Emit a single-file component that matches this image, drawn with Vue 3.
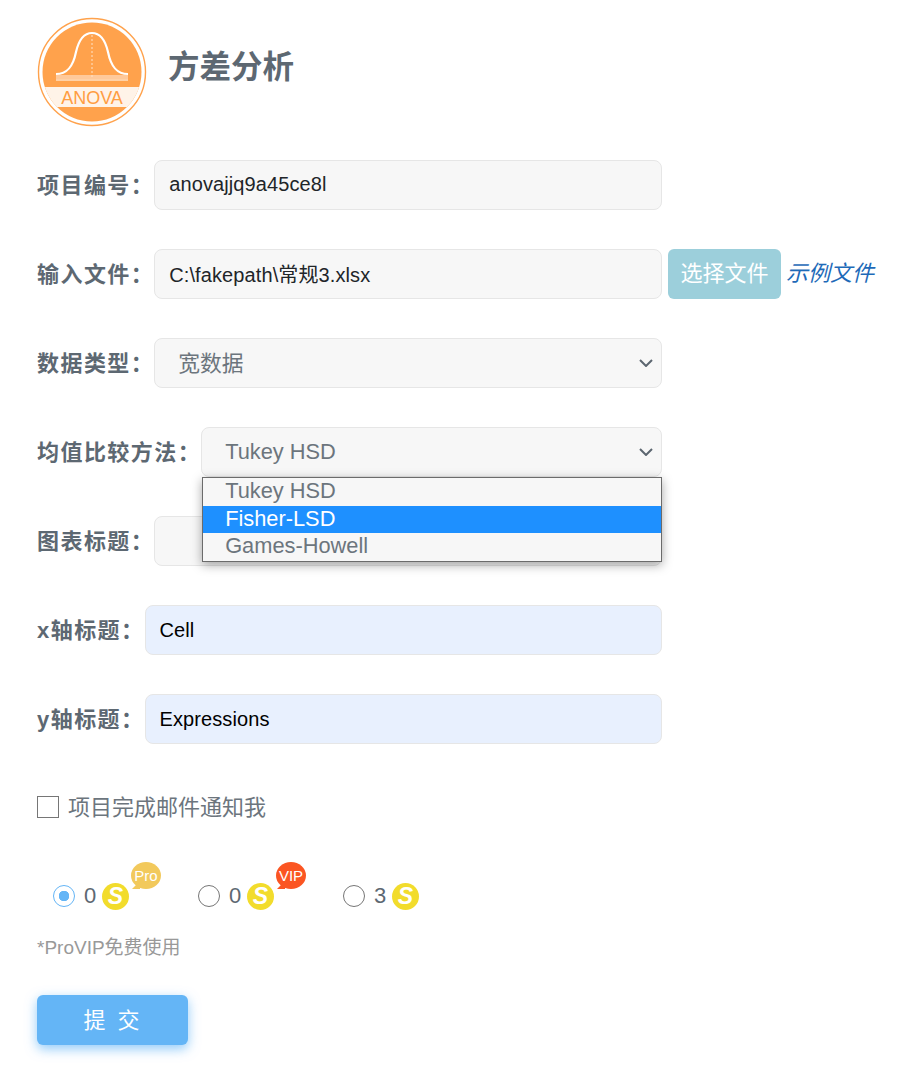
<script setup>
import { ref } from 'vue';

const projectId = ref('anovajjq9a45ce8l');
const filePath = ref('C:\\fakepath\\常规3.xlsx');
const dataType = ref('宽数据');
const chartTitle = ref('');
const xTitle = ref('Cell');
const yTitle = ref('Expressions');
const notify = ref(false);
const plan = ref('pro');

const methods = ['Tukey HSD', 'Fisher-LSD', 'Games-Howell'];
const method = ref('Tukey HSD');
const hovered = ref('Fisher-LSD');

const plans = [
	{ id: 'pro', price: 0, badge: 'Pro', color: '#f2c95c' },
	{ id: 'vip', price: 0, badge: 'VIP', color: '#fb5522' },
	{ id: 'normal', price: 3 },
];
</script>

<template>
	<main class="page">
		<header class="head">
			<svg class="logo" viewBox="0 0 110 110" width="110" height="110">
				<defs>
					<clipPath id="disc"><circle cx="55" cy="55" r="49.5" /></clipPath>
				</defs>
				<circle cx="55" cy="55" r="53.5" fill="#fff" stroke="#ffa24c" stroke-width="1.4" />
				<circle cx="55" cy="55" r="49.5" fill="#ffa24c" />
				<rect x="0" y="70" width="110" height="20" fill="#fff3e8" clip-path="url(#disc)" />
				<path d="M19 58 H91 V62 H19 Z" fill="#ffc99a" />
				<path d="M19 57 C30 57 36 50 39 35 C42 22 47 16 55 16 C63 16 68 22 71 35 C74 50 80 57 91 57" fill="none" stroke="#fff" stroke-width="2.2" />
				<path d="M19 63 H91" stroke="#fff" stroke-width="1.2" />
				<path d="M55 18 V62" stroke="#ffe3c8" stroke-width="1" stroke-dasharray="2 2" />
				<text x="55" y="87" text-anchor="middle" class="logo-text">ANOVA</text>
			</svg>
			<h1>方差分析</h1>
		</header>

		<form class="form" @submit.prevent>
			<div class="row">
				<div class="field">
					<label>项目编号：</label>
					<input class="box plain" v-model="projectId" />
				</div>
			</div>

			<div class="row">
				<div class="field">
					<label>输入文件：</label>
					<input class="box plain" v-model="filePath" readonly />
				</div>
				<button type="button" class="pick">选择文件</button>
				<a class="sample" href="#">示例文件</a>
			</div>

			<div class="row">
				<div class="field">
					<label>数据类型：</label>
					<div class="select box cjk">
						<span>{{ dataType }}</span>
						<svg class="chev" viewBox="0 0 14 8" width="14" height="8"><path d="M1 1 L7 7 L13 1" fill="none" stroke="#5c6670" stroke-width="2" /></svg>
					</div>
				</div>
			</div>

			<div class="row">
				<div class="field">
					<label>均值比较方法：</label>
					<div class="select box">
						<span>{{ method }}</span>
						<svg class="chev" viewBox="0 0 14 8" width="14" height="8"><path d="M1 1 L7 7 L13 1" fill="none" stroke="#5c6670" stroke-width="2" /></svg>
						<ul class="menu">
							<li
								v-for="m in methods"
								:key="m"
								:class="{ on: m === hovered }"
								@mouseenter="hovered = m"
								@click="method = m"
							>{{ m }}</li>
						</ul>
					</div>
				</div>
			</div>

			<div class="row">
				<div class="field">
					<label>图表标题：</label>
					<input class="box plain" v-model="chartTitle" />
				</div>
			</div>

			<div class="row">
				<div class="field">
					<label>x轴标题：</label>
					<input class="box filled" v-model="xTitle" />
				</div>
			</div>

			<div class="row">
				<div class="field">
					<label>y轴标题：</label>
					<input class="box filled" v-model="yTitle" />
				</div>
			</div>

			<label class="check">
				<input type="checkbox" v-model="notify" />
				<span>项目完成邮件通知我</span>
			</label>

			<div class="plans">
				<label v-for="p in plans" :key="p.id" class="plan">
					<input type="radio" :value="p.id" v-model="plan" />
					<span class="price">{{ p.price }}</span>
					<span class="coin">S</span>
					<span v-if="p.badge" class="badge" :style="{ background: p.color, '--tail': p.color }">{{ p.badge }}</span>
				</label>
			</div>

			<p class="note">*ProVIP免费使用</p>

			<button type="submit" class="submit">提 交</button>
		</form>
	</main>
</template>

<style scoped>
.page {
	padding: 17px 0 42px 37px;
	font-family: "Liberation Sans", "Noto Sans CJK SC", sans-serif;
	color: #6c757d;
}

.head {
	display: flex;
	align-items: center;
	gap: 21px;
	margin-bottom: 33px;
}

.logo {
	display: block;
}

.logo-text {
	font-size: 18px;
	fill: #ff9d42;
	font-family: "Liberation Sans", sans-serif;
}

h1 {
	margin: 0 0 16px;
	font-size: 31.5px;
	font-weight: 700;
	color: #5d6872;
}

.form {
	display: flex;
	flex-direction: column;
}

.row {
	display: flex;
	align-items: center;
	height: 50px;
	margin-bottom: 39px;
}

.field {
	display: flex;
	align-items: center;
	width: 625px;
	flex: none;
}

.field label {
	flex: none;
	margin-bottom: 4px;
	font-size: 22px;
	font-weight: 700;
	letter-spacing: 1.45px;
	color: #5d6872;
	white-space: nowrap;
}

.box {
	flex: 1;
	min-width: 0;
	height: 50px;
	box-sizing: border-box;
	border: 1px solid #e6e6e6;
	border-radius: 8px;
	padding: 0 14px 2px;
	font-family: inherit;
	font-size: 20px;
	letter-spacing: 0.1px;
	outline: none;
}

.plain {
	background: #f7f7f7;
	color: #212529;
}

.filled {
	padding-bottom: 0;
	background: #e8f0fe;
	color: #000;
}

.select {
	position: relative;
	display: flex;
	align-items: center;
	background: #f7f7f7;
	padding: 0 0 0 23px;
	font-size: 21.8px;
	letter-spacing: 0;
	color: #6c757d;
}

.select.cjk {
	padding-bottom: 4px;
}

.chev {
	position: absolute;
	right: 8px;
	top: 20px;
}

.menu {
	position: absolute;
	left: 0;
	right: -1px;
	top: 49px;
	z-index: 5;
	margin: 0;
	padding: 0;
	list-style: none;
	background: #f7f7f7;
	border: 1px solid #6b6b6b;
	box-shadow: 0 3px 10px rgba(0, 0, 0, 0.35);
}

.menu li {
	height: 27.6px;
	line-height: 25px;
	padding-left: 22px;
}

.menu li.on {
	background: #1e90ff;
	color: #fff;
}

.pick {
	width: 113px;
	height: 50px;
	margin-left: 6px;
	flex: none;
	border: 0;
	border-radius: 6px;
	background: #9ccfdb;
	color: #fff;
	font-family: inherit;
	font-size: 22px;
	padding: 0 0 7px;
}

.sample {
	margin: 0 0 6px 5px;
	font-size: 22px;
	font-style: italic;
	color: #1e6ab8;
	text-decoration: none;
	white-space: nowrap;
}

.check {
	display: flex;
	align-items: center;
	gap: 9px;
	height: 46px;
	margin-top: 1px;
	font-size: 22px;
}

.check span {
	margin-bottom: 4px;
}

.check input {
	appearance: none;
	width: 22px;
	height: 22px;
	margin: 0;
	background: #fff;
	border: 1px solid #767676;
}

.plans {
	display: flex;
	margin-top: 52px;
	padding-left: 16px;
}

.plan {
	position: relative;
	display: flex;
	align-items: center;
	width: 145px;
	height: 28px;
	font-size: 22px;
}

.plan input {
	appearance: none;
	width: 22px;
	height: 22px;
	margin: 0 9px 0 0;
	background: #fff;
	border: 1px solid #767676;
	border-radius: 50%;
	box-sizing: border-box;
}

.plan input:checked {
	border-color: #64b5f6;
	background: radial-gradient(circle, #64b5f6 0 5px, #fff 5.5px);
}

.price {
	width: 18px;
	color: #5d6872;
}

.coin {
	width: 27px;
	height: 27px;
	border-radius: 50%;
	background: #f2dc2c;
	color: #fff;
	font-weight: 700;
	font-style: italic;
	font-size: 23px;
	line-height: 27px;
	text-align: center;
}

.badge {
	position: absolute;
	left: 78px;
	top: -20px;
	width: 30px;
	height: 27px;
	border-radius: 50%;
	color: #fff;
	font-size: 15px;
	line-height: 27px;
	text-align: center;
}

.badge::after {
	content: "";
	position: absolute;
	left: 1px;
	bottom: 0;
	width: 8px;
	height: 8px;
	background: var(--tail);
	clip-path: polygon(0 100%, 100% 0, 100% 100%);
}

.note {
	margin: 22px 0 0;
	font-size: 19px;
	color: #999;
}

.submit {
	width: 151px;
	height: 50px;
	margin-top: 36px;
	padding: 0 0 4px;
	border: 0;
	border-radius: 6px;
	background: #64b5f6;
	box-shadow: 0 4px 12px rgba(100, 181, 246, 0.7);
	color: #fff;
	font-family: inherit;
	font-size: 22px;
	letter-spacing: 2px;
	word-spacing: 2px;
}
</style>
